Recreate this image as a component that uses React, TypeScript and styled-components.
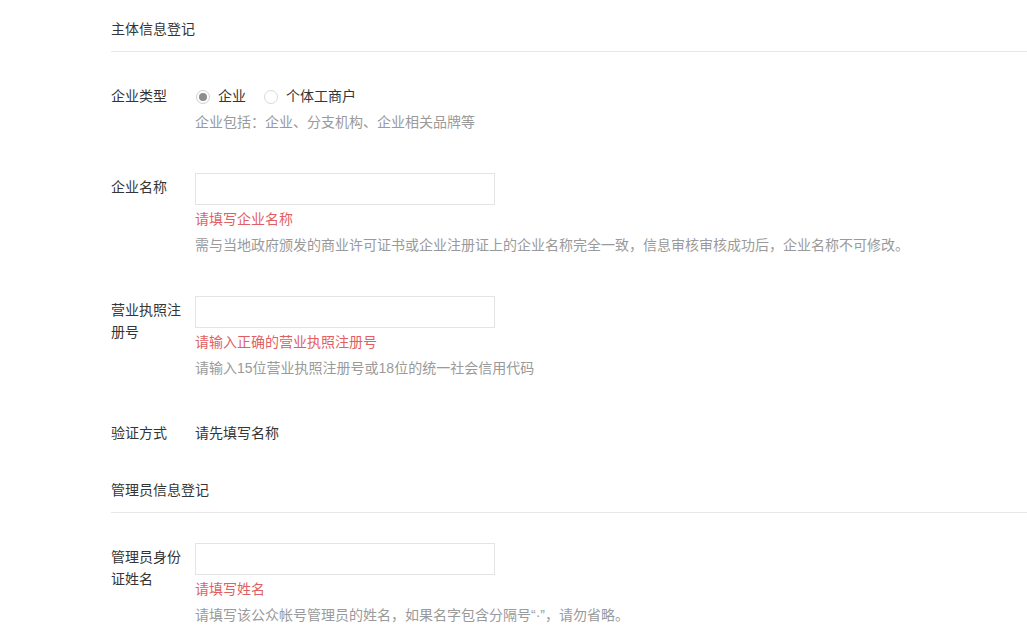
import React from 'react'
import styled, { createGlobalStyle } from 'styled-components'

const GlobalStyle = createGlobalStyle`
    html, body {
        margin: 0;
        padding: 0;
        background: #ffffff;
    }
    body {
        font-family: "Liberation Sans", "Noto Sans CJK SC", sans-serif;
        font-size: 14px;
        color: #353535;
    }
`

const Page = styled.div`
    padding-left: 111px;
`

const Section = styled.section`
    padding-bottom: 16px;
`

const SectionTitle = styled.h3`
    margin: 0;
    padding: 18px 0 11px;
    font-size: 14px;
    font-weight: normal;
    line-height: 22px;
    color: #353535;
    border-bottom: 1px solid #e7e7eb;
`

const FormBody = styled.div`
    padding-top: 30px;
`

const Row = styled.div<{ $last?: boolean }>`
    display: flex;
    align-items: flex-start;
    margin-bottom: ${(p) => (p.$last ? '0' : '39px')};
`

const Label = styled.label`
    width: 74px;
    margin-right: 10px;
    padding: 3px 0 1px;
    line-height: 22px;
    color: #353535;
    flex-shrink: 0;
`

const Control = styled.div`
    display: flex;
    flex-direction: column;
`

const PlainValue = styled.div`
    padding: 3px 0 1px;
    line-height: 22px;
    color: #353535;
`

const RadioGroup = styled.div`
    display: flex;
    align-items: center;
    padding: 3px 0 1px;
    line-height: 22px;
    gap: 17px;
`

const RadioOption = styled.span`
    display: flex;
    align-items: center;
    gap: 8px;
    color: #353535;
    cursor: pointer;
`

const RadioDot = styled.i<{ $checked?: boolean }>`
    position: relative;
    display: inline-block;
    width: 12px;
    height: 12px;
    margin: 1px 0 0 1px;
    border: 1px solid ${(p) => (p.$checked ? '#cfcfcf' : '#d9d9d9')};
    border-radius: 50%;
    background: #fff;

    &::after {
        content: '';
        display: ${(p) => (p.$checked ? 'block' : 'none')};
        position: absolute;
        top: 2px;
        left: 2px;
        width: 8px;
        height: 8px;
        border-radius: 50%;
        background: #8d8d8d;
    }
`

const Input = styled.input`
    box-sizing: border-box;
    width: 300px;
    height: 32px;
    margin: 0;
    padding: 0 10px;
    border: 1px solid #e4e4e4;
    border-radius: 0;
    outline: none;
    font-family: inherit;
    font-size: 14px;
    color: #353535;
`

const ErrorText = styled.p`
    margin: 3px 0 0;
    padding-bottom: 1px;
    line-height: 22px;
    color: #e15f63;
`

const Tip = styled.p`
    margin: 3px 0 0;
    padding-bottom: 1px;
    line-height: 22px;
    color: #9a9a9a;
    white-space: nowrap;
`

const TextField = ({ label, error, tip, last }: { label: string; error: string; tip: string; last?: boolean }) => (
    <Row $last={last}>
        <Label>{label}</Label>
        <Control>
            <Input type="text" />
            <ErrorText>{error}</ErrorText>
            <Tip>{tip}</Tip>
        </Control>
    </Row>
)

export default function App() {
    return (
        <Page>
            <GlobalStyle />
            <Section>
                <SectionTitle>主体信息登记</SectionTitle>
                <FormBody>
                    <Row>
                        <Label>企业类型</Label>
                        <Control>
                            <RadioGroup>
                                <RadioOption>
                                    <RadioDot $checked />
                                    企业
                                </RadioOption>
                                <RadioOption>
                                    <RadioDot />
                                    个体工商户
                                </RadioOption>
                            </RadioGroup>
                            <Tip>企业包括：企业、分支机构、企业相关品牌等</Tip>
                        </Control>
                    </Row>
                    <TextField
                        label="企业名称"
                        error="请填写企业名称"
                        tip="需与当地政府颁发的商业许可证书或企业注册证上的企业名称完全一致，信息审核审核成功后，企业名称不可修改。"
                    />
                    <TextField
                        label="营业执照注册号"
                        error="请输入正确的营业执照注册号"
                        tip="请输入15位营业执照注册号或18位的统一社会信用代码"
                    />
                    <Row $last>
                        <Label>验证方式</Label>
                        <PlainValue>请先填写名称</PlainValue>
                    </Row>
                </FormBody>
            </Section>
            <Section>
                <SectionTitle>管理员信息登记</SectionTitle>
                <FormBody>
                    <TextField
                        label="管理员身份证姓名"
                        error="请填写姓名"
                        tip="请填写该公众帐号管理员的姓名，如果名字包含分隔号“·”，请勿省略。"
                        last
                    />
                </FormBody>
            </Section>
        </Page>
    )
}
